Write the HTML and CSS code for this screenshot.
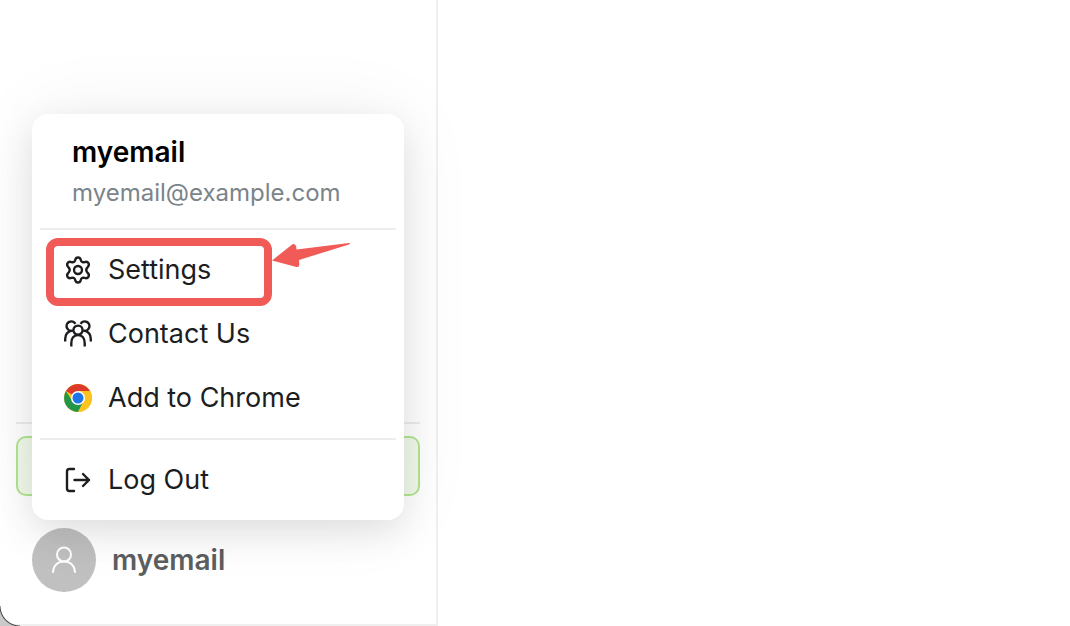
FILE: index.html
```html
<!DOCTYPE html>
<html lang="en">
<head>
<meta charset="utf-8">
<title>Account menu</title>
<link rel="stylesheet" href="styles.css">
</head>
<body>
<div class="app">
  <aside class="sidebar">
    <hr class="sidebar-rule">
    <div class="promo"></div>
    <div class="account">
      <button class="account-button" type="button" aria-haspopup="menu" aria-expanded="true">
        <span class="avatar">
          <svg width="28" height="28" viewBox="0 0 28 28" fill="none" stroke="currentColor" stroke-width="2" stroke-linecap="round" aria-hidden="true">
            <circle cx="14" cy="8.5" r="7"/>
            <path d="M3 26c.6-6.500 4.800-10.500 11-10.500S24.400 19.500 25 26"/>
          </svg>
        </span>
        <span class="account-name">myemail</span>
      </button>
      <div class="menu">
        <div class="menu-header">
          <div class="menu-name">myemail</div>
          <div class="menu-email">myemail@example.com</div>
        </div>
        <hr class="menu-rule">
        <div class="marked">
          <button class="menu-item" type="button">
            <svg class="icon" viewBox="1 1 26 26" fill="none" stroke="currentColor" stroke-width="2.200" stroke-linejoin="round" aria-hidden="true">
              <path d="M11.500 4.500Q12 2.400 14 2.400T16.500 4.500Q17.200 7.600 20.200 6.600Q22.600 5.800 23.700 7.700T23 11.300Q20.400 14 23 16.700Q24.800 18.500 23.700 20.300T20.200 21.400Q17.200 20.400 16.500 23.500Q16 25.600 14 25.600T11.500 23.500Q10.800 20.400 7.800 21.400Q5.400 22.200 4.300 20.300T5 16.700Q7.600 14 5 11.300Q3.200 9.500 4.300 7.700T7.800 6.600Q10.800 7.600 11.500 4.500Z"/>
              <circle cx="14" cy="14" r="3.700"/>
            </svg>
            <span>Settings</span>
          </button>
          <span class="mark-box"></span>
          <svg class="mark-arrow" viewBox="0 0 80 28" aria-hidden="true">
            <path d="M1 18.500 21.500 2.200Q24 1.500 25 4L25.600 7.600 78 1Q80 1.200 78 2.500L28 18 28.300 23Q28.200 25.500 25.500 25Z" fill="currentColor"/>
          </svg>
        </div>
        <button class="menu-item" type="button">
          <svg class="icon" viewBox="0 0 28 28" fill="none" stroke="currentColor" stroke-width="2.400" aria-hidden="true">
            <path d="M9 10.500A4.700 4.700 0 1 1 11.400 3.800M19 10.500A4.700 4.700 0 1 0 16.600 3.800"/>
            <circle cx="14" cy="10.200" r="4.600"/>
            <path d="M7.300 26.500v-3.500c0-4.600 2.500-8 6.700-8s6.700 3.400 6.700 8v3.500M1.200 21.500v-2.500c0-4.500 2.300-7.500 6.500-8.400M26.800 21.500v-2.500c0-4.500-2.300-7.500-6.500-8.400"/>
          </svg>
          <span>Contact Us</span>
        </button>
        <button class="menu-item" type="button">
          <svg class="icon" viewBox="0 0 28 28" aria-hidden="true">
            <circle cx="14" cy="14" r="14" fill="#fcc31e"/>
            <path d="M14 14 1.900 7A14 14 0 0 1 26.100 7Z" fill="#dc3a2b"/>
            <path d="M8.500 17.200 1.900 7A14 14 0 0 0 14 28L19.500 17.200Z" fill="#24964a"/>
            <path d="M14 7H26.100A14 14 0 0 1 14 28L20.100 17.500Z" fill="#fcc31e"/>
            <circle cx="14" cy="14" r="7" fill="#fff"/>
            <circle cx="14" cy="14" r="5.500" fill="#1f74e8"/>
          </svg>
          <span>Add to Chrome</span>
        </button>
        <hr class="menu-rule">
        <button class="menu-item" type="button">
          <svg class="icon" viewBox="0 0 28 28" fill="none" stroke="currentColor" stroke-width="2.400" stroke-linecap="round" stroke-linejoin="round" aria-hidden="true">
            <path d="M10 3H5.500Q3 3 3 5.500v17Q3 25 5.500 25H10M10.500 14H25M19 8 25 14l-6 6"/>
          </svg>
          <span>Log Out</span>
        </button>
      </div>
    </div>
  </aside>
  <main class="content"></main>
</div>
</body>
</html>
```
FILE: styles.css
```css
* {
  box-sizing: border-box;
}

body {
  margin: 0;
  background: #fff;
  color: #1c1d1f;
  font-family: Inter, "Liberation Sans", sans-serif;
}

.app {
  position: relative;
  display: flex;
  min-height: 100vh;
}

/* rounded window corner */
.app::after {
  content: "";
  position: absolute;
  bottom: 0;
  left: 0;
  width: 20px;
  height: 20px;
  background: radial-gradient(circle at top right, transparent 19px, #444 20px, #c9c9c9 21px);
}

.sidebar {
  display: flex;
  flex: 0 0 438px;
  flex-direction: column;
  justify-content: flex-end;
  padding: 0 16px 32px;
  border-right: 2px solid #efefef;
  border-bottom: 2px solid #efefef;
}

.content {
  flex: 1;
}

.sidebar-rule,
.menu-rule {
  width: 100%;
  height: 2px;
  margin: 0;
  border: 0;
  background: #ededed;
}

.promo {
  height: 60px;
  margin: 12px 0 32px;
  border: 2px solid #b2e68f;
  border-radius: 10px;
  background: #f1faeb;
}

.account {
  position: relative;
  padding: 0 16px;
}

.account-button {
  display: flex;
  align-items: center;
  gap: 16px;
  width: 100%;
  padding: 0;
  border: 0;
  background: none;
  color: #5d5e60;
  font: 600 28px/36px Inter, "Liberation Sans", sans-serif;
}

.avatar {
  display: flex;
  align-items: center;
  justify-content: center;
  width: 64px;
  height: 64px;
  border-radius: 50%;
  background: #c0c0c0;
  color: #fff;
}

.menu {
  position: absolute;
  right: 16px;
  bottom: calc(100% + 8px);
  left: 16px;
  padding: 8px;
  border-radius: 16px;
  background: #fff;
  box-shadow: 0 12px 36px rgba(0, 0, 0, 0.1), 0 0 80px rgba(0, 0, 0, 0.06);
}

.menu-header {
  padding: 10px 32px;
}

.menu-name {
  color: #000;
  font-size: 28px;
  font-weight: 600;
  line-height: 40px;
}

.menu-email {
  margin-top: 4px;
  color: #7b8489;
  font-size: 24px;
  line-height: 34px;
}

.menu-rule {
  margin: 8px 0;
}

.marked {
  position: relative;
}

.menu-item {
  display: flex;
  align-items: center;
  gap: 16px;
  width: 100%;
  height: 64px;
  padding: 0 24px;
  border: 0;
  background: none;
  color: #1c1d1f;
  font: 400 27px/36px Inter, "Liberation Sans", sans-serif;
  text-align: left;
}

.icon {
  flex: none;
  width: 28px;
  height: 28px;
}

.mark-box {
  position: absolute;
  top: 0;
  left: 6px;
  width: 226px;
  height: 68px;
  border: 8px solid #f05b57;
  border-radius: 12px;
  pointer-events: none;
}

.mark-arrow {
  position: absolute;
  top: 4px;
  left: 231px;
  width: 80px;
  height: 28px;
  color: #f05b57;
  pointer-events: none;
}
```
